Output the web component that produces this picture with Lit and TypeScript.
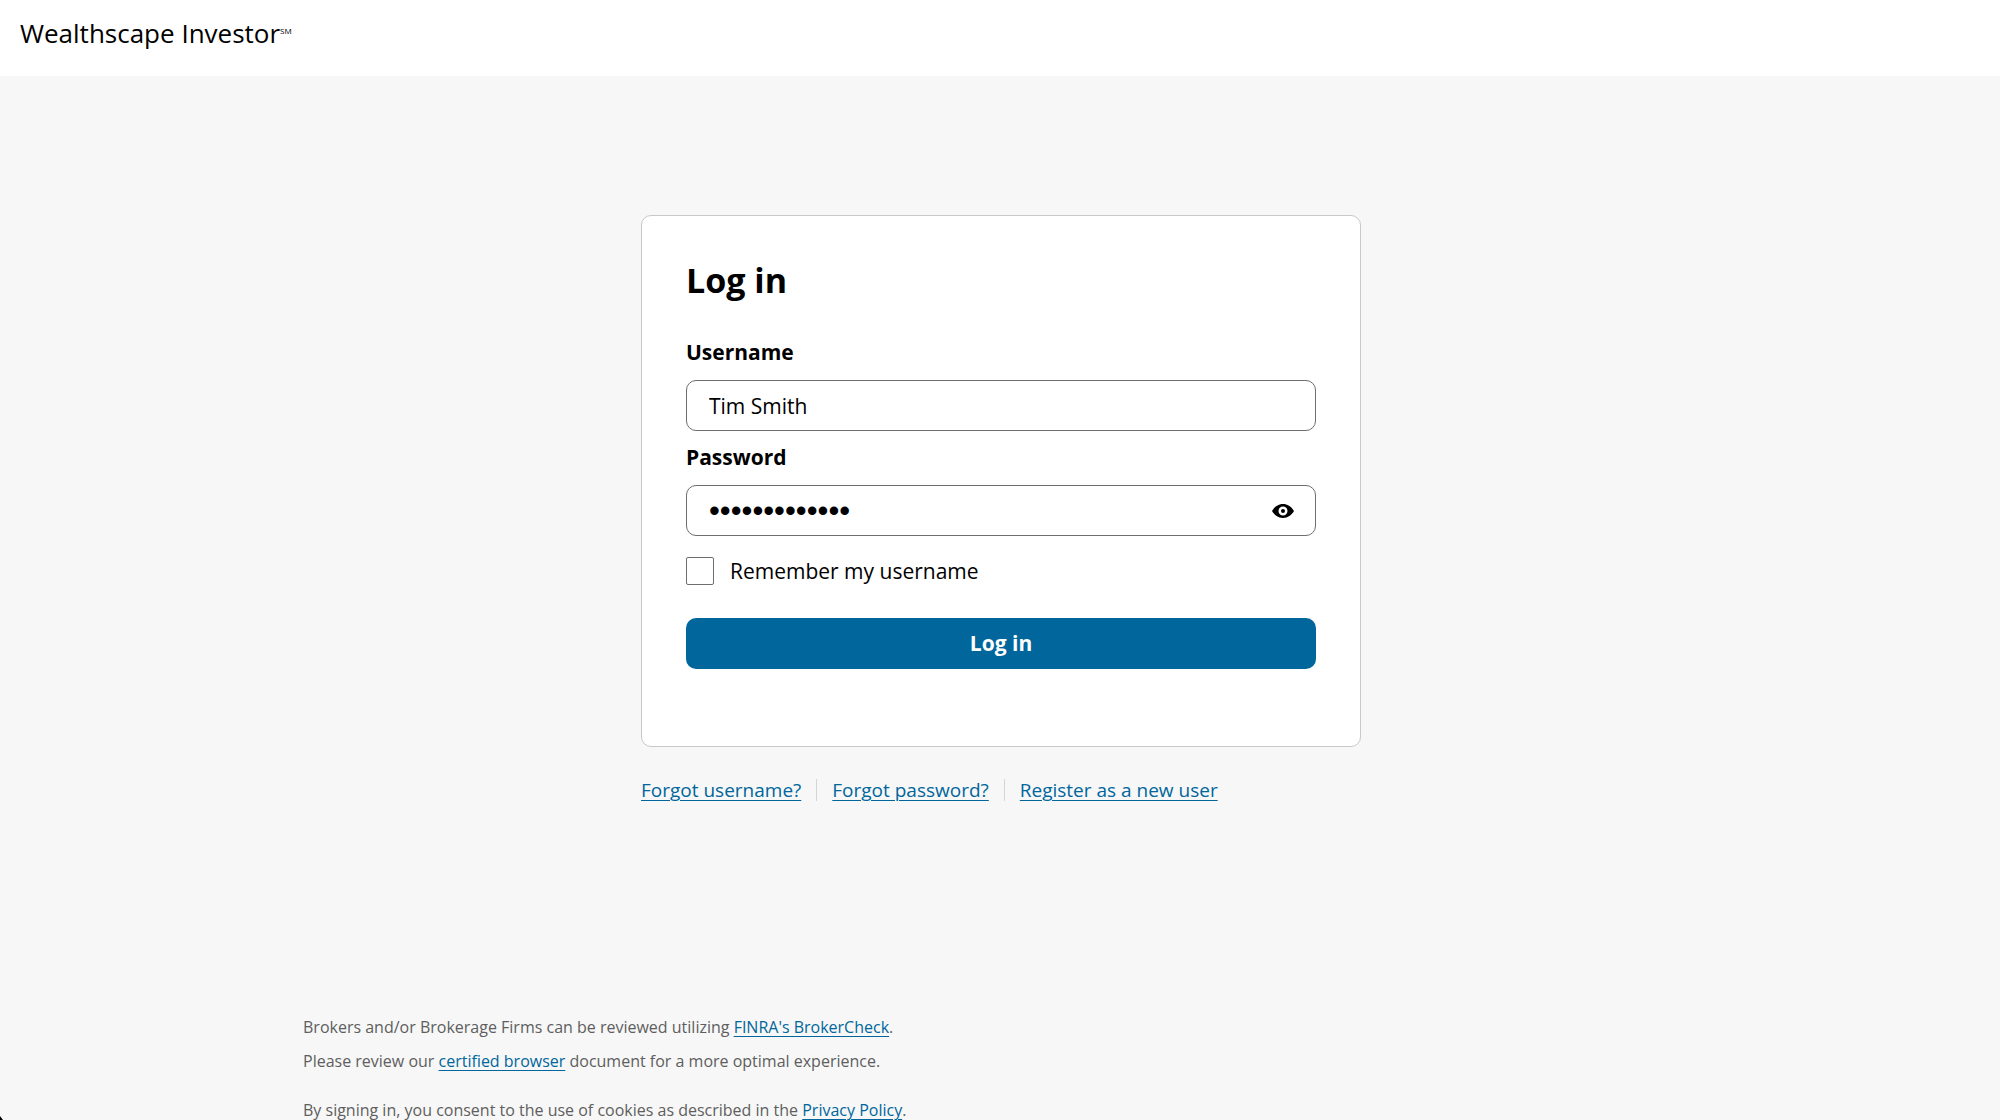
import { LitElement, html, css, svg } from "lit";
import { customElement, state } from "lit/decorators.js";

const eyeIcon = svg`
  <svg class="eye" viewBox="0 0 24 24" aria-hidden="true">
    <path fill-rule="evenodd" d="M1 12C3.400 8 7.200 5 12 5S20.600 8 23 12C20.600 16 16.800 19 12 19S3.400 16 1 12ZM12 7.500A4.500 4.500 0 1 0 12 16.500A4.500 4.500 0 1 0 12 7.500ZM12 10A2 2 0 1 1 12 14A2 2 0 1 1 12 10Z" />
  </svg>
`;

@customElement("app-root")
export class AppRoot extends LitElement {
  static styles = css`
    :host {
      display: block;
      position: relative;
      height: 100vh;
      overflow-y: auto;
      scrollbar-width: none;
      background: #f7f7f7;
      color: #000;
      font-family: "Open Sans", "Noto Sans", sans-serif;
      font-size: 21px;
    }
    * {
      box-sizing: border-box;
    }
    .corner {
      position: fixed;
      left: 0;
      bottom: 0;
      width: 3px;
      height: 4px;
      background: #000;
      clip-path: polygon(0 0, 100% 100%, 0 100%);
    }
    .header {
      height: 76px;
      padding: 15px 20px;
      background: #fff;
    }
    .brand {
      font-size: 26px;
      line-height: 36px;
    }
    .mark {
      font-size: 8px;
      line-height: 0;
      vertical-align: 9px;
    }
    .main {
      max-width: 722px;
      margin: 139px auto 0;
      padding-left: 2px;
    }
    .card {
      padding: 39px 44px 77px;
      background: #fff;
      border: 1px solid #c8c8c8;
      border-radius: 10px;
    }
    .form {
      display: flex;
      flex-direction: column;
    }
    .title {
      margin: 0 0 32px;
      font-size: 34px;
      line-height: 50px;
      font-weight: 700;
    }
    .label {
      margin-bottom: 13px;
      line-height: 30px;
      font-weight: 700;
    }
    .field {
      display: flex;
      align-items: center;
      height: 51px;
      margin-bottom: 11px;
      padding: 0 20px 0 22px;
      border: 1px solid #6e6e6e;
      border-radius: 10px;
      background: #fff;
    }
    .input {
      flex: 1;
      min-width: 0;
      height: 100%;
      padding: 0;
      border: 0;
      outline: 0;
      background: none;
      color: #000;
      font: inherit;
    }
    .secret {
      font-family: "Liberation Sans", sans-serif;
      font-size: 31px;
    }
    .toggle {
      display: flex;
      padding: 0;
      border: 0;
      background: none;
      cursor: pointer;
    }
    .eye {
      width: 24px;
      height: 24px;
      fill: #000;
    }
    .remember {
      display: flex;
      align-items: center;
      gap: 16px;
      margin: 9px 0 32px;
      line-height: 30px;
    }
    .check {
      appearance: none;
      width: 28px;
      height: 28px;
      margin: 0;
      border: 1px solid #6e6e6e;
      border-radius: 2px;
      background: #fff;
    }
    .check:checked {
      background: #00669b;
    }
    .submit {
      height: 51px;
      padding: 0 0 2px;
      border: 0;
      border-radius: 10px;
      background: #00669b;
      color: #fff;
      font: inherit;
      font-weight: 700;
      cursor: pointer;
    }
    .links {
      display: flex;
      align-items: center;
      margin-top: 32px;
      font-size: 19px;
      line-height: 22px;
    }
    .links a + a {
      margin-left: 15px;
      padding-left: 15px;
      border-left: 1px solid #d5d5d5;
    }
    a {
      color: #00669b;
      text-decoration-thickness: 1px;
      text-underline-offset: 3px;
    }
    .footer {
      max-width: 1394px;
      margin: 214px auto 0;
      color: #5e5e5e;
      font-size: 16px;
      line-height: 24px;
    }
    .note {
      margin: 0 0 10px;
    }
    .consent {
      margin: 25px 0 0;
    }
  `;

  @state() private revealed = false;

  private toggle() {
    this.revealed = !this.revealed;
  }

  render() {
    return html`
      <header class="header">
        <div class="brand">Wealthscape Investor<span class="mark">SM</span></div>
      </header>
      <main class="main">
        <section class="card">
          <form class="form" @submit=${(e: Event) => e.preventDefault()}>
            <h1 class="title">Log in</h1>
            <label class="label" for="username">Username</label>
            <div class="field">
              <input class="input" id="username" type="text" .value=${"Tim Smith"} />
            </div>
            <label class="label" for="password">Password</label>
            <div class="field">
              <input
                class="input ${this.revealed ? "" : "secret"}"
                id="password"
                type=${this.revealed ? "text" : "password"}
                .value=${"abcdefghijklm"}
              />
              <button class="toggle" type="button" aria-label="Show password" @click=${this.toggle}>
                ${eyeIcon}
              </button>
            </div>
            <label class="remember">
              <input class="check" type="checkbox" />
              <span>Remember my username</span>
            </label>
            <button class="submit" type="submit">Log in</button>
          </form>
        </section>
        <nav class="links">
          <a href="#username">Forgot username?</a>
          <a href="#password">Forgot password?</a>
          <a href="#register">Register as a new user</a>
        </nav>
      </main>
      <footer class="footer">
        <p class="note">
          Brokers and/or Brokerage Firms can be reviewed utilizing
          <a href="#brokercheck">FINRA's BrokerCheck</a>.
        </p>
        <p class="note">
          Please review our <a href="#browsers">certified browser</a> document for a more optimal
          experience.
        </p>
        <p class="consent">
          By signing in, you consent to the use of cookies as described in the
          <a href="#privacy">Privacy Policy</a>.
        </p>
      </footer>
      <div class="corner"></div>
    `;
  }
}
